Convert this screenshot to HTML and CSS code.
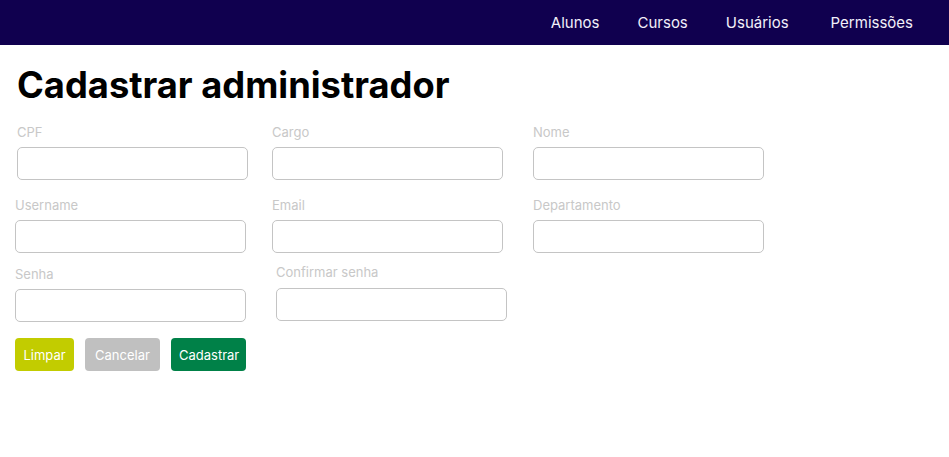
FILE: index.html
```html
<!DOCTYPE html>
<html lang="pt-BR">
<head>
<meta charset="utf-8">
<title>Cadastrar administrador</title>
<link rel="stylesheet" href="styles.css">
</head>
<body>
<header class="topbar">
  <nav class="nav">
    <a class="nav-link" href="#">Alunos</a>
    <a class="nav-link" href="#">Cursos</a>
    <a class="nav-link" href="#">Usuários</a>
    <a class="nav-link nav-link-last" href="#">Permissões</a>
  </nav>
</header>
<main class="content">
  <h1 class="title">Cadastrar administrador</h1>
  <form class="form">
    <div class="row row-1">
      <div class="field field-a1"><label class="label">CPF</label><input class="input" type="text"></div>
      <div class="field field-b"><label class="label">Cargo</label><input class="input" type="text"></div>
      <div class="field field-c"><label class="label">Nome</label><input class="input" type="text"></div>
    </div>
    <div class="row row-2">
      <div class="field"><label class="label">Username</label><input class="input" type="text"></div>
      <div class="field field-b"><label class="label">Email</label><input class="input" type="text"></div>
      <div class="field field-c"><label class="label">Departamento</label><input class="input" type="text"></div>
    </div>
    <div class="row row-3">
      <div class="field"><label class="label">Senha</label><input class="input" type="password"></div>
      <div class="field field-b3"><label class="label">Confirmar senha</label><input class="input" type="password"></div>
    </div>
    <div class="actions">
      <button type="button" class="btn btn-clear">Limpar</button>
      <button type="button" class="btn btn-cancel">Cancelar</button>
      <button type="button" class="btn btn-submit">Cadastrar</button>
    </div>
  </form>
</main>
</body>
</html>
```
FILE: styles.css
```css
* { box-sizing: border-box; }
body {
  margin: 0;
  font-family: Inter, "Noto Sans", sans-serif;
  background: #fff;
  color: #000;
}
.topbar {
  height: 45px;
  background: #10004f;
  display: flex;
  justify-content: flex-end;
  align-items: center;
  padding-right: 36px;
}
.nav {
  display: flex;
  gap: 38px;
}
.nav-link {
  color: #f2f0fa;
  text-decoration: none;
  font-size: 15px;
  line-height: 18px;
}
.nav-link-last { margin-left: 4px; }
.content {
  padding: 0 15px;
}
.title {
  margin: 18px 0 0 2px;
  font-size: 36.3px;
  font-weight: 700;
  line-height: 44px;
}
.form {
  margin-top: 16px;
}
.row {
  display: flex;
}
.row-2 { margin-top: 16px; }
.row-3 { margin-top: 12px; }
.field {
  width: 231px;
  display: flex;
  flex-direction: column;
  gap: 7px;
  padding-top: 1px;
}
.field-a1 { margin-left: 2px; }
.field-a1 + .field-b { margin-left: 24px; }
.field-b { margin-left: 26px; }
.field-c { margin-left: 30px; }
.field-b3 { margin-left: 30px; margin-top: -2px; gap: 8px; }
.label {
  font-size: 13px;
  line-height: 16px;
  color: #c8c8c8;
}
.input {
  height: 33px;
  width: 100%;
  border: 1px solid #c4c4c4;
  border-radius: 5px;
  background: #fff;
  font-family: inherit;
  font-size: 13px;
  padding: 0 8px;
}
.actions {
  display: flex;
  gap: 11px;
  margin-top: 16px;
}
.btn {
  height: 33px;
  border: none;
  border-radius: 4px;
  color: #fff;
  font-family: inherit;
  font-size: 13px;
  padding: 0 8px;
}
.btn-clear { background: #c2cc00; width: 59px; }
.btn-cancel { background: #c0c0c0; width: 75px; }
.btn-submit { background: #008148; width: 75px; }
```
